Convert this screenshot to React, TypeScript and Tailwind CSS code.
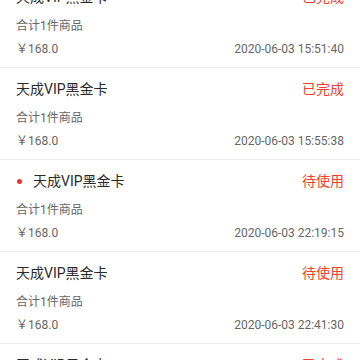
const orders = [
  { title: "天成VIP黑金卡", status: "已完成", time: "2020-06-03 15:51:40", dot: false },
  { title: "天成VIP黑金卡", status: "已完成", time: "2020-06-03 15:55:38", dot: false },
  { title: "天成VIP黑金卡", status: "待使用", time: "2020-06-03 22:19:15", dot: true },
  { title: "天成VIP黑金卡", status: "待使用", time: "2020-06-03 22:41:30", dot: false },
  { title: "天成VIP黑金卡", status: "已完成", time: "2020-06-03 22:50:12", dot: false },
];

export default function App() {
  return (
    <div
      className="w-[360px] h-[360px] overflow-hidden bg-white"
      style={{ fontFamily: 'Roboto, "Noto Sans CJK SC", sans-serif' }}
    >
      <div className="-mt-[24px]">
        {orders.map((o, i) => (
          <div key={i} className="h-[92px] border-b border-[#ececec] px-4 pt-[10px] flex flex-col">
            <div className="flex items-center justify-between h-[22px]">
              <div className="flex items-center">
                {o.dot && <span className="w-[5px] h-[5px] rounded-full bg-[#f23030] ml-[1px] mr-[11px]" />}
                <span className="text-[14px] text-[#2a2a2a] leading-none">{o.title}</span>
              </div>
              <span className="text-[14px] text-[#f5402f] leading-none">{o.status}</span>
            </div>
            <div className="mt-[10px] text-[12px] text-[#666666] leading-none h-[16px] flex items-center">合计1件商品</div>
            <div className="mt-[7px] flex items-center justify-between h-[16px] text-[12px] text-[#666666] leading-none">
              <span>￥168.0</span>
              <span>{o.time}</span>
            </div>
          </div>
        ))}
      </div>
    </div>
  );
}
